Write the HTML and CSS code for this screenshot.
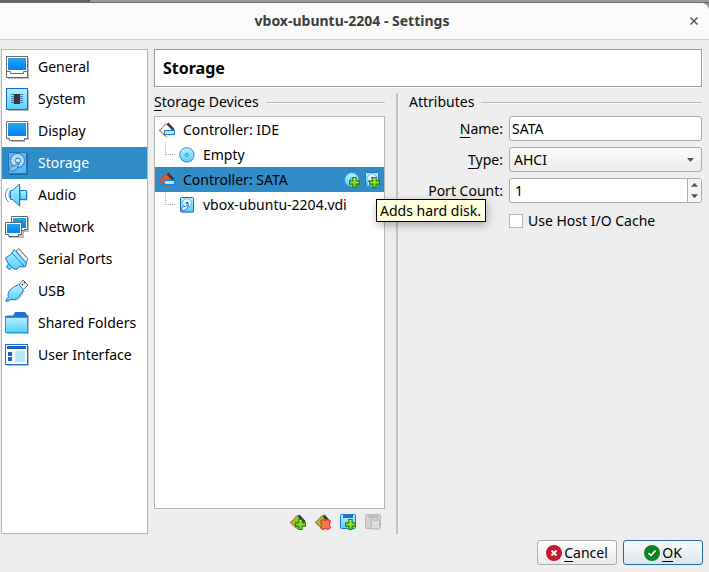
FILE: index.html
```html
<!DOCTYPE html>
<html lang="en">
<head>
<meta charset="utf-8">
<title>vbox-ubuntu-2204 - Settings</title>
<link rel="stylesheet" href="styles.css">
</head>
<body>
<svg class="defs" aria-hidden="true">
  <defs>
    <linearGradient id="screen" x1="0" y1="0" x2="0" y2="1"><stop offset="0" stop-color="#25a5e6"/><stop offset="1" stop-color="#0080ff"/></linearGradient>
    <linearGradient id="pale" x1="0" y1="0" x2="0" y2="1"><stop offset="0" stop-color="#b4f1ff"/><stop offset="1" stop-color="#57cfff"/></linearGradient>
    <linearGradient id="green" x1="0" y1="0" x2="0" y2="1"><stop offset="0" stop-color="#b8f25c"/><stop offset="1" stop-color="#5fd31a"/></linearGradient>
    <symbol id="disk" viewBox="0 0 16 16">
      <rect x="2" y="1" width="13" height="15" rx="1" fill="#aaa" opacity=".6"/>
      <rect x="1.500" y=".5" width="13" height="14.500" rx="1" fill="url(#pale)" stroke="#1670cf"/>
      <circle cx="8" cy="6" r="4.300" fill="#eefaff" stroke="#5aa6e0" stroke-width=".8"/>
      <circle cx="8.200" cy="6" r="1.300" fill="#2070c0"/>
      <path d="M9.500 7.500c0 3-2 5-5 6H3c-1-2 0-4 2-4s3-1 4.500-2z" fill="#e4f7ff" stroke="#2474cc"/>
    </symbol>
    <symbol id="disc" viewBox="0 0 16 16">
      <circle cx="8.300" cy="8.500" r="7.300" fill="#999" opacity=".5"/>
      <circle cx="7.800" cy="7.800" r="7.200" fill="url(#pale)" stroke="#3f8fcb"/>
      <circle cx="7.800" cy="7.800" r="1.500" fill="#bdefff" stroke="#2c7fc1"/>
    </symbol>
    <symbol id="plus" viewBox="0 0 10 10"><path d="M3.500.5h3v3h3v3h-3v3h-3v-3h-3v-3h3z" fill="url(#green)" stroke="#27820b"/></symbol>
    <symbol id="cross" viewBox="0 0 10 10"><path d="M1 1.500 3 .5 5 1.500 7 .5 9.500 2 8.500 5l1 3L7 9.500 5 8.500 3 9.500.5 8l1-3-1-3z" fill="#ff7450" stroke="#d33d1b"/></symbol>
    <symbol id="chip" viewBox="0 0 16 16">
      <path d="M.5 9.500 8 1.500l8 7L8.500 16z" fill="#888" opacity=".35"/>
      <path d="M.5 8.500 8 1l7 7-7 7z" fill="currentColor"/>
      <path d="M7.500 2.500 9.500.5l6 6.500-1.500 2z" fill="#383838"/>
      <path d="M.5 8.500 7.500 1.500M.5 8.500 7.500 15" stroke="#d94722" stroke-width="1.200" stroke-dasharray="1.500 .7" fill="none"/>
    </symbol>
    <symbol id="controller" viewBox="0 0 16 16">
      <use href="#chip" width="16" height="16"/>
      <rect x="5.500" y="8.500" width="10" height="4" fill="#a9e9ff" stroke="#1f7fd0"/>
    </symbol>
  </defs>
</svg>

<div class="backdrop"></div>
<div class="window">
  <header class="titlebar">
    <h1>vbox-ubuntu-2204 - Settings</h1>
    <button class="close" type="button" aria-label="Close"><svg viewBox="0 0 10 10"><path d="M1.500 1.500l7 7m0-7-7 7" stroke="#555" stroke-width="1.500"/></svg></button>
  </header>

  <main class="content">
    <nav class="sections" aria-label="Settings sections">
      <a href="#general"><svg viewBox="0 0 24 24"><path d="M3 3h21v21H3z" fill="#bbb"/><rect x="1.500" y="1.500" width="21" height="21" fill="#fff" stroke="#6d6d6d"/><rect x="3" y="3" width="18" height="12" fill="url(#screen)"/><path d="M2 16.500h3.500v2h13v-2H22" fill="none" stroke="#6d6d6d"/></svg>General</a>
      <a href="#system"><svg viewBox="0 0 24 24"><path d="M3 3h21v21H3z" fill="#bbb"/><rect x="1.500" y="1.500" width="21" height="21" fill="url(#pale)" stroke="#1569d6"/><path d="M6 7.500h12M6 9.500h12M6 11.500h12M6 13.500h12M6 15.500h12" stroke="#3f7caa"/><rect x="9" y="7" width="6" height="10" fill="#333645"/></svg>System</a>
      <a href="#display"><svg viewBox="0 0 24 24"><path d="M3 4h21v17h-4v2H6v-2H3z" fill="#bbb"/><path d="M1.500 2.500h21v17h-3v2h-15v-2h-3z" fill="#fff" stroke="#6d6d6d"/><rect x="3" y="4" width="18" height="13" fill="url(#screen)"/></svg>Display</a>
      <a href="#storage" class="current" aria-current="page"><svg viewBox="0 0 24 24"><rect x="4" y="2" width="19" height="22" rx="1" fill="#1f6fa8"/><rect x="3.500" y="1.500" width="18" height="21" rx="1" fill="#5bb8f0" stroke="#1e6fc4"/><circle cx="12.500" cy="9.500" r="7" fill="#b5daf0" stroke="#2d77ba"/><path d="M14 11c0 5-3 9-7.500 9.500-2.500-1-2-4.500 0-5s5-1 7.500-4.500z" fill="#82c6ef" stroke="#1d6fb8"/><circle cx="13" cy="9.500" r="2.500" fill="#cdeafa" stroke="#1d6fb8"/></svg>Storage</a>
      <a href="#audio"><svg viewBox="0 0 24 24"><path d="M6.500 9.500h2l7-7v6h7v9h-7v6l-7-7h-2z" fill="#bbb"/><path d="M5.500 7.500h2l7-6.500v22l-7-6.500h-2z" fill="url(#pale)" stroke="#1876c5"/><path d="M15 7.500h6.500v9H15z" fill="url(#pale)" stroke="#1876c5"/><path d="M3.500 5C-.5 9-.5 15 3.500 19M5.500 8c-2 3-2 5 0 8" fill="none" stroke="#3289cb"/></svg>Audio</a>
      <a href="#network"><svg viewBox="0 0 24 24"><path d="M7 3h17v14h-5v6H4V9h3z" fill="#bbb"/><path d="M6.500 1.500h16v13h-3v1h-10v-1h-3z" fill="#fff" stroke="#666"/><rect x="8" y="3" width="13" height="10" fill="url(#screen)"/><path d="M.5 7.500h16v12h-3v2h-10v-2h-3z" fill="#fff" stroke="#666"/><rect x="2" y="9" width="13" height="9" fill="url(#screen)"/></svg>Network</a>
      <a href="#serial"><svg viewBox="0 0 24 24"><path d="m11 4 3-2.500L23 12l-2 4z" fill="#eee" stroke="#777"/><path d="m14 2 9 10" stroke="#777" stroke-dasharray="1 1"/><path d="M9 2.500 21.500 16 20 20l-5-.5-4 3-4-2-3 2-2.500-2.500 2-3L.5 11l6-4z" fill="url(#pale)" stroke="#176fc4"/><path d="m7 6 12 13M3 16l4 4" stroke="#2b83cd" fill="none"/></svg>Serial Ports</a>
      <a href="#usb"><svg viewBox="0 0 24 24"><path d="m14 6 4-5 5 5-5 5z" fill="#f2f2f2" stroke="#777"/><path d="m17 5 1 1m1-3 1 1" stroke="#333" stroke-width="1.500"/><path d="M1.500 23.500 5 19c-3-4 1-8 9-12.500L20 12c-4 8-8 12-12 9z" fill="#aaa" opacity=".5"/><path d="M1 22.500c0-2 1-3 2.500-4.500C1.500 13 6 9 13.500 5.500l5 5C15 18 10.500 22.500 6.500 20c-2 .5-3 2.500-5.500 2.500z" fill="url(#pale)" stroke="#1876c5"/></svg>USB</a>
      <a href="#shared"><svg viewBox="0 0 24 24"><path d="M2 4h22v19H2z" fill="#bbb"/><path d="M0 5h8l2-4h10l3 4v5H0z" fill="#2472cf"/><rect x=".5" y="6.500" width="22" height="15" fill="url(#pale)" stroke="#219be0"/></svg>Shared Folders</a>
      <a href="#interface"><svg viewBox="0 0 24 24"><path d="M2 3h22v20H2z" fill="#bbb"/><rect x=".5" y="1.500" width="22" height="20" fill="#f5fcff" stroke="#1673cd"/><path d="M2 4.500h19" stroke="#1b63b9" stroke-width="3"/><path d="M3 9h4v4H3zm0 5h4v4H3z" fill="#1b63b9"/><path d="M10 8h10v11H10z" fill="#b4e9fa"/></svg>User Interface</a>
    </nav>

    <section class="page">
      <h2 class="page-title">Storage</h2>
      <div class="columns">
        <section class="devices">
          <h3 class="group-title"><span><u>S</u>torage Devices</span></h3>
          <ul class="tree">
            <li class="node"><svg class="white-chip" viewBox="0 0 16 16"><use href="#controller"/></svg><span>Controller: IDE</span></li>
            <li class="node child"><i class="branch"></i><svg viewBox="0 0 16 16"><use href="#disc"/></svg><span>Empty</span></li>
            <li class="node selected"><svg class="red-chip" viewBox="0 0 16 16"><use href="#controller"/></svg><span>Controller: SATA</span>
              <button type="button" class="icon-button" aria-label="Adds optical drive."><svg viewBox="0 0 16 16"><use href="#disc" width="16" height="16"/><use href="#plus" x="5" y="5" width="11" height="11"/></svg></button>
              <button type="button" class="icon-button" aria-label="Adds hard disk." aria-describedby="tip"><svg viewBox="0 0 16 16"><use href="#disk" width="16" height="16"/><use href="#plus" x="5" y="5" width="11" height="11"/></svg></button>
              <div class="tooltip" id="tip" role="tooltip">Adds hard disk.</div>
            </li>
            <li class="node child"><i class="branch"></i><svg viewBox="0 0 16 16"><use href="#disk"/></svg><span>vbox-ubuntu-2204.vdi</span></li>
          </ul>
          <div class="tools">
            <button type="button" class="icon-button green-chip" aria-label="Add controller"><svg viewBox="0 0 16 16"><use href="#chip"/><use href="#plus" x="5" y="5" width="11" height="11"/></svg></button>
            <button type="button" class="icon-button green-chip" aria-label="Remove controller"><svg viewBox="0 0 16 16"><use href="#chip"/><use href="#cross" x="5" y="5" width="11" height="11"/></svg></button>
            <button type="button" class="icon-button" aria-label="Add attachment"><svg viewBox="0 0 16 16"><rect x=".5" y=".5" width="15" height="14" rx="1" fill="url(#pale)" stroke="#1876d1"/><path d="M3 0h10v4H3z" fill="#2373cc"/><use href="#plus" x="5" y="5" width="11" height="11"/></svg></button>
            <button type="button" class="icon-button" aria-label="Remove attachment" disabled><svg viewBox="0 0 16 16"><rect x=".5" y=".5" width="15" height="14" rx="1" fill="#d2d2d2" stroke="#b9b9b9"/><path d="M3 0h10v4H3z" fill="#bdbdbd"/><path d="m6 6.500 2-1 2.500 1.500L13 5.500l2.500 1.500-1 3.500 1 3-2.500 2-2.500-1-2.500 1-2.500-2 1-3z" fill="#dcdcdc" stroke="#b0b0b0"/></svg></button>
          </div>
        </section>

        <form class="attributes">
          <h3 class="group-title"><span>Attributes</span></h3>
          <div class="fields">
            <label for="name"><u>N</u>ame:</label>
            <input class="field" id="name" type="text" value="SATA">
            <label for="type"><u>T</u>ype:</label>
            <div class="select-wrap"><select class="field" id="type"><option>AHCI</option></select><i class="arrow down"></i></div>
            <label for="ports"><u>P</u>ort Count:</label>
            <div class="field spin"><input id="ports" type="number" value="1" min="1"><div class="steps"><button type="button" aria-label="Increase"><i class="arrow up"></i></button><button type="button" aria-label="Decrease"><i class="arrow down"></i></button></div></div>
            <label class="check"><input type="checkbox">Use Host I/O Cache</label>
          </div>
        </form>
      </div>
    </section>
  </main>

  <footer class="actions">
    <button type="button" class="action"><svg viewBox="0 0 16 16"><circle cx="8" cy="8" r="8" fill="#c7162b"/><path d="m5.500 5.500 5 5m0-5-5 5" stroke="#fff" stroke-width="1.800"/></svg><span><u>C</u>ancel</span></button>
    <button type="button" class="action default"><svg viewBox="0 0 16 16"><circle cx="8" cy="8" r="8" fill="#0e8420"/><path d="m4.500 8 2.500 2.500 4.500-5" fill="none" stroke="#fff" stroke-width="1.600"/></svg><span><u>O</u>K</span></button>
  </footer>
</div>
</body>
</html>
```
FILE: styles.css
```css
* {
  box-sizing: border-box;
}

body {
  display: flex;
  flex-direction: column;
  min-height: 100vh;
  margin: 0;
  background: #8f8f8f;
  color: #000;
  font: 14px/20px "Noto Sans", "Open Sans", sans-serif;
}

button,
input,
select {
  margin: 0;
  padding: 0;
  border: 0;
  color: inherit;
  font: inherit;
}

h1,
h2,
h3,
ul {
  margin: 0;
  padding: 0;
  font-size: inherit;
}

svg {
  display: block;
  flex: none;
}

u {
  text-decoration-thickness: 1px;
  text-underline-offset: 3px;
  text-decoration-skip-ink: none;
}

.defs {
  position: absolute;
  width: 0;
  height: 0;
}

.backdrop {
  height: 3px;
  border-bottom: 1px solid #6c6c6c;
  background: linear-gradient(90deg, #666 88px, #555 88px, #555 90px, #999 90px);
}

.window {
  display: flex;
  flex: 1;
  flex-direction: column;
  border-radius: 0 8px 0 0;
  background: #eee;
}

.titlebar {
  display: grid;
  grid-template-columns: 1fr auto 1fr;
  align-items: center;
  height: 37px;
  padding: 0 10px 0 5px;
  border-bottom: 1px solid #cfcfcf;
  border-radius: 0 8px 0 0;
  background: #fafafa;
}

.titlebar h1 {
  grid-column: 2;
  color: #3d3d3d;
  font-weight: 700;
}

.close {
  justify-self: end;
  background: none;
}

.close svg {
  width: 10px;
  height: 10px;
}

.content {
  display: flex;
  flex: 1;
  gap: 6px;
  padding: 9px 7px 6px 1px;
}

.sections {
  flex: none;
  width: 147px;
  padding-top: 1px;
  border: 1px solid #b4b4b4;
  background: #fff;
}

.sections a {
  display: flex;
  align-items: center;
  gap: 9px;
  height: 32px;
  padding-left: 3px;
  color: inherit;
  text-decoration: none;
  white-space: nowrap;
}

.sections a.current {
  background: #308cc6;
  color: #fff;
}

.sections svg {
  width: 24px;
  height: 24px;
}

.page {
  display: flex;
  flex: 1;
  flex-direction: column;
  min-width: 0;
}

.page-title {
  height: 38px;
  padding: 0 8px;
  border: 1px solid #989898;
  box-shadow: 1px 1px #fff;
  background: #fff;
  font-size: 16px;
  line-height: 36px;
}

.columns {
  display: flex;
  flex: 1;
  padding-top: 6px;
}

.devices {
  display: flex;
  flex-direction: column;
  flex: none;
  width: 231px;
}

.group-title {
  display: flex;
  align-items: center;
  gap: 7px;
  height: 18px;
  font-weight: 400;
  white-space: nowrap;
}

.group-title::after {
  flex: 1;
  height: 1px;
  background: #bababa;
  box-shadow: 0 1px #fafafa;
  content: "";
}

.tree {
  flex: 1;
  margin-top: 5px;
  border: 1px solid #b4b4b4;
  background: #fff;
  list-style: none;
}

.node {
  position: relative;
  display: flex;
  align-items: center;
  gap: 8px;
  height: 25px;
  padding: 0 4px;
  white-space: nowrap;
}

.node > span {
  flex: 1;
}

.node svg,
.icon-button svg,
.action svg {
  width: 16px;
  height: 16px;
}

.selected {
  gap: 4px;
  background: #308cc6;
}

.selected > span {
  margin-left: 4px;
}

.child {
  padding-left: 10px;
}

.branch {
  align-self: flex-start;
  width: 10px;
  height: 13px;
  margin-right: -4px;
  border: dotted #aaa;
  border-width: 0 0 1px 1px;
}

.icon-button {
  background: none;
}

.white-chip {
  color: #fff;
}

.red-chip {
  color: #e8522f;
}

.green-chip {
  color: #75d52c;
}

.tooltip {
  position: absolute;
  top: 32px;
  left: 221px;
  z-index: 1;
  height: 23px;
  padding: 0 4px 0 3px;
  border: 1px solid #000;
  box-shadow: 1px 3px 10px rgb(0 0 0 / 30%);
  background: #ffffdc;
  line-height: 21px;
}

.tools {
  display: flex;
  align-items: center;
  justify-content: flex-end;
  gap: 9px;
  height: 25px;
  padding: 0 4px 0 0;
}

.attributes {
  flex: 1;
  min-width: 0;
  margin-left: 11px;
  padding-left: 11px;
  border-left: 2px solid #c3c3c3;
}

.fields {
  display: grid;
  grid-template-columns: 94px minmax(0, 1fr);
  align-items: center;
  gap: 6px;
  margin-top: 5px;
}

.fields > label {
  text-align: right;
  white-space: nowrap;
}

.field {
  width: 100%;
  height: 25px;
  padding: 0 2px;
  border: 1px solid #ababab;
  border-radius: 3px;
  background: #fff;
}

.select-wrap {
  position: relative;
}

select.field {
  display: block;
  padding: 0 4px;
  appearance: none;
  background: linear-gradient(#fbfbfb, #ececec);
}

.arrow {
  display: block;
  width: 7px;
  height: 4px;
  background: #555;
}

.arrow.down {
  clip-path: polygon(0 0, 100% 0, 50% 100%);
}

.arrow.up {
  clip-path: polygon(50% 0, 100% 100%, 0 100%);
}

.select-wrap .arrow {
  position: absolute;
  top: 11px;
  right: 8px;
  pointer-events: none;
}

.spin {
  display: flex;
  padding: 0 0 0 5px;
}

.spin input {
  flex: 1;
  min-width: 0;
  appearance: textfield;
  background: none;
}

.spin input::-webkit-inner-spin-button {
  display: none;
}

.steps {
  display: flex;
  flex-direction: column;
  width: 14px;
  border-left: 1px solid #ababab;
  border-radius: 0 2px 2px 0;
  background: #f6f6f6;
}

.steps button {
  display: grid;
  flex: 1;
  place-items: center;
  background: none;
}

.fields > .check {
  display: flex;
  grid-column: 2;
  align-items: center;
  gap: 5px;
  height: 24px;
  text-align: left;
}

.check input {
  width: 14px;
  height: 14px;
  appearance: none;
  border: 1px solid #b8b8b8;
  background: #fff;
}

.check input:checked {
  background: #308cc6;
}

.actions {
  display: flex;
  justify-content: flex-end;
  gap: 6px;
  padding: 0 6px 7px;
}

.action {
  display: flex;
  align-items: center;
  justify-content: center;
  gap: 2px;
  width: 80px;
  height: 25px;
  border: 1px solid #ababab;
  border-radius: 3px;
  background: linear-gradient(#fdfdfd, #ebebeb);
}

.action.default {
  border-color: #226f9f;
  background: linear-gradient(#f8fbfd, #dde5ea);
}
```
